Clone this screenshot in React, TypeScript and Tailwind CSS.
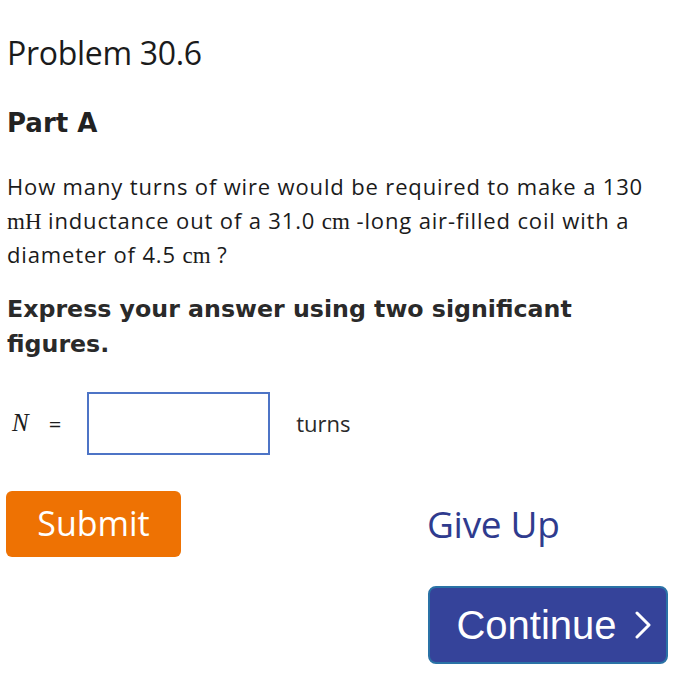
export default function App() {
  const sans = "font-['Open_Sans','Lato',sans-serif]";
  const heavy = "font-['DejaVu_Sans','Open_Sans',sans-serif] font-bold";
  const math = "font-['Liberation_Serif','Times_New_Roman',serif]";

  return (
    <div className={`min-h-screen w-[695px] bg-white text-[#1b1b1b] ${sans}`}>
      <div className="pl-[7px] pt-[33px]">
        <h1 className="text-[32px] leading-[40px] font-normal tracking-[-0.3px]">Problem 30.6</h1>

        <h2 className={`mt-[35px] text-[26px] leading-[30px] text-[#222] ${heavy}`}>Part A</h2>

        <p className="mt-[32px] text-[22px] leading-[33.5px] tracking-[0.85px]">
          How many turns of wire would be required to make a 130
          <br />
          <span className={`${math} text-[23px] tracking-normal`}>mH</span> inductance out of a 31.0{" "}
          <span className={`${math} text-[23px] tracking-normal`}>cm</span> -long air-filled coil with a
          <br />
          diameter of 4.5 <span className={`${math} text-[23px] tracking-normal`}>cm</span> ?
        </p>

        <p className={`mt-[19px] text-[23.7px] leading-[35px] text-[#2a2a2a] ${heavy}`}>
          Express your answer using two significant
          <br />
          figures.
        </p>

        <div className="mt-[30px] flex items-center">
          <span className="ml-[5px] flex items-center gap-[20px] text-[22px]">
            <span className={`${math} italic text-[25px]`}>N</span>
            <span>=</span>
          </span>
          <div className="ml-[26px] h-[63px] w-[183px] border-2 border-[#4d74c6] bg-white" />
          <span className="ml-[26px] text-[22px] text-[#2a2a2a]">turns</span>
        </div>

        <div className="mt-[36px] flex items-center">
          <button className="h-[66px] w-[175px] -ml-[1px] rounded-[6px] bg-[#ee7203] text-[34px] text-white">
            Submit
          </button>
          <span className="ml-[246px] text-[37px] tracking-[-0.3px] text-[#2f3b8e]">Give Up</span>
        </div>

        <div className="mt-[29px] flex justify-end pr-[27px]">
          <button className="flex h-[78px] w-[240px] items-center justify-center gap-[17px] pl-[12px] rounded-[8px] border-2 border-[#2a72a6] bg-[#35439a] font-['Liberation_Sans',Arial,sans-serif] text-[40px] text-white">
            <span>Continue</span>
            <svg width="18" height="28" viewBox="0 0 18 28" fill="none">
              <path d="M3 2 L15 14 L3 26" stroke="white" strokeWidth="3" strokeLinecap="round" strokeLinejoin="round" />
            </svg>
          </button>
        </div>
      </div>
    </div>
  );
}
